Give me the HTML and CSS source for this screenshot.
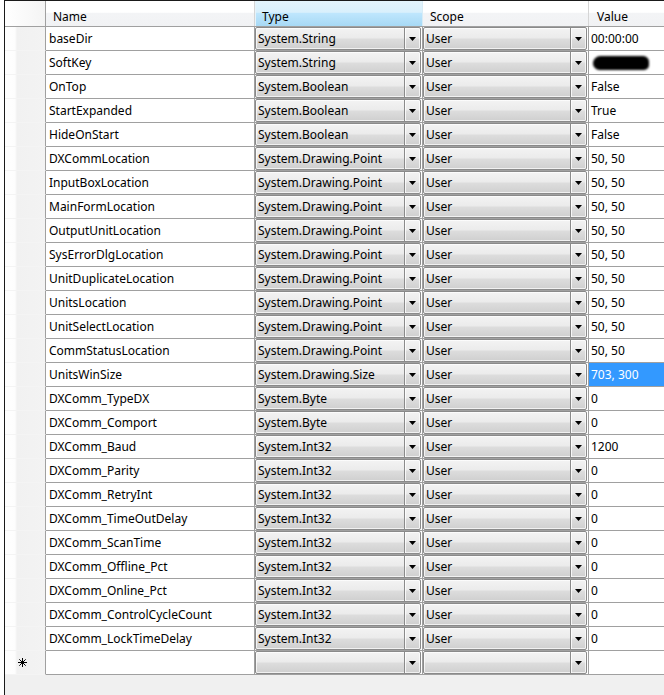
FILE: index.html
```html
<!DOCTYPE html>
<html>
<head>
<meta charset="utf-8">
<link rel="stylesheet" href="styles.css">
</head>
<body>
<div class="frame">
  <div class="hdr">
    <div class="hc rh"></div>
    <div class="hc c-name">Name</div>
    <div class="hc c-type hot">Type</div>
    <div class="hc c-scope">Scope</div>
    <div class="hc c-val">Value</div>
  </div>
  <div id="rows"></div>
</div>
<script src="app.js"></script>
</body>
</html>
```
FILE: app.js
```js
var data = [
  ["baseDir","System.String","00:00:00"],
  ["SoftKey","System.String","#REDACT"],
  ["OnTop","System.Boolean","False"],
  ["StartExpanded","System.Boolean","True"],
  ["HideOnStart","System.Boolean","False"],
  ["DXCommLocation","System.Drawing.Point","50, 50"],
  ["InputBoxLocation","System.Drawing.Point","50, 50"],
  ["MainFormLocation","System.Drawing.Point","50, 50"],
  ["OutputUnitLocation","System.Drawing.Point","50, 50"],
  ["SysErrorDlgLocation","System.Drawing.Point","50, 50"],
  ["UnitDuplicateLocation","System.Drawing.Point","50, 50"],
  ["UnitsLocation","System.Drawing.Point","50, 50"],
  ["UnitSelectLocation","System.Drawing.Point","50, 50"],
  ["CommStatusLocation","System.Drawing.Point","50, 50"],
  ["UnitsWinSize","System.Drawing.Size","703, 300"],
  ["DXComm_TypeDX","System.Byte","0"],
  ["DXComm_Comport","System.Byte","0"],
  ["DXComm_Baud","System.Int32","1200"],
  ["DXComm_Parity","System.Int32","0"],
  ["DXComm_RetryInt","System.Int32","0"],
  ["DXComm_TimeOutDelay","System.Int32","0"],
  ["DXComm_ScanTime","System.Int32","0"],
  ["DXComm_Offline_Pct","System.Int32","0"],
  ["DXComm_Online_Pct","System.Int32","0"],
  ["DXComm_ControlCycleCount","System.Int32","0"],
  ["DXComm_LockTimeDelay","System.Int32","0"],
  null
];
var arrow = '<svg class="arr" width="7" height="4" viewBox="0 0 7 4"><polygon points="0,0 7,0 3.5,4" fill="#000"/></svg>';
var star = '<svg class="star" width="9" height="9" viewBox="0 0 9 9"><g stroke="#000" stroke-width="1"><line x1="4.5" y1="0" x2="4.5" y2="9"/><line x1="0" y1="4.5" x2="9" y2="4.5"/><line x1="1.3" y1="1.3" x2="7.7" y2="7.7"/><line x1="7.7" y1="1.3" x2="1.3" y2="7.7"/></g></svg>';
function combo(t){
  return '<div class="combo"><span class="ctext">'+t+'</span><span class="cbtn">'+arrow+'</span></div>';
}
var html = '';
data.forEach(function(r){
  if(!r){
    html += '<div class="row newrow"><div class="c rh">'+star+'</div><div class="c c-name"></div>'+
      '<div class="c c-type">'+combo('')+'</div><div class="c c-scope">'+combo('')+'</div><div class="c c-val"></div></div>';
    return;
  }
  var v = r[2], vc = 'c c-val';
  if(v === '#REDACT'){ v = '<span class="redact"></span>'; }
  if(r[0] === 'UnitsWinSize'){ vc += ' sel'; }
  html += '<div class="row"><div class="c rh"></div><div class="c c-name">'+r[0]+'</div>'+
    '<div class="c c-type">'+combo(r[1])+'</div><div class="c c-scope">'+combo('User')+'</div>'+
    '<div class="'+vc+'">'+v+'</div></div>';
});
document.getElementById('rows').innerHTML = html;
```
FILE: styles.css
```css
html, body {
  margin: 0;
  padding: 0;
  background: #ffffff;
}
body {
  font-family: "Noto Sans", "Open Sans", sans-serif;
  font-size: 12px;
  color: #000;
  overflow: hidden;
}
.frame {
  margin-left: 4px;
  border-left: 1px solid #1a1a1a;
  border-top: 1px solid #1a1a1a;
  height: 694px;
  background: #f0f0f0;
  overflow: hidden;
}
.hdr {
  display: flex;
  height: 25px;
  border-bottom: 1px solid #a0a0a0;
  background: linear-gradient(#ffffff, #ffffff 45%, #f3f4f6 50%, #f1f2f4);
}
.hc {
  display: flex;
  align-items: center;
  box-sizing: border-box;
  border-right: 1px solid #d5d5d5;
  padding-left: 6px;
  padding-top: 5px;
  flex: none;
}
.hdr .rh { width: 41px; border-right: 1px solid #a0a0a0; padding: 0; background: linear-gradient(to right, #ffffff, #f4f4f4); }
.hdr .c-name { width: 209px; padding-left: 7px; }
.hdr .c-type { width: 168px; }
.hdr .c-scope { width: 166px; padding-left: 7px; }
.hdr .c-val { flex: 1; border-right: none; padding-left: 8px; }
.hdr .hot {
  background: linear-gradient(#e3f4fc, #d9f0fc 45%, #bee6fd 50%, #a7d9f5);
  border-left: 1px solid #e6f3fa;
  border-right: 1px solid #d8ecf6;
}
.row {
  display: flex;
  height: 24px;
}
.c {
  box-sizing: border-box;
  height: 24px;
  flex: none;
  border-bottom: 1px solid #a0a0a0;
  border-right: 1px solid #a0a0a0;
  background: #fff;
  display: flex;
  align-items: center;
  white-space: nowrap;
  overflow: hidden;
}
.c.rh {
  width: 41px;
  background: linear-gradient(to right, #ffffff 0, #fdfdfd 25%, #f1f1f1 30%, #f3f3f3 100%);
  border-bottom: 1px solid #f4f4f4;
  border-right: 1px solid #a0a0a0;
  padding-left: 13px;
}
.c.c-name { width: 209px; padding-left: 3px; }
.c.c-type { width: 168px; padding: 0; align-items: stretch; }
.c.c-scope { width: 166px; padding: 0; align-items: stretch; }
.c.c-val { flex: 1; border-right: none; padding-left: 2px; }
.c.sel { background: #3399ff; color: #fff; }
.combo {
  flex: 1;
  display: flex;
  margin: 0 1px 0 0;
  border: 1px solid #8a8a8a;
  border-radius: 2px;
  background: linear-gradient(#f3f3f3, #ebebeb 48%, #dddddd 52%, #cfcfcf);
  box-shadow: inset 0 0 0 1px rgba(255,255,255,0.7);
}
.ctext {
  flex: 1;
  display: flex;
  align-items: center;
  padding-left: 2px;
}
.cbtn {
  width: 15px;
  flex: none;
  display: flex;
  align-items: center;
  justify-content: center;
  border-left: 1px solid #8a8a8a;
  box-shadow: inset 1px 0 0 rgba(255,255,255,0.8);
}
.arr { display: block; }
.star { display: block; }
.redact {
  display: inline-block;
  width: 56px;
  height: 14px;
  margin-left: 2px;
  margin-top: 1px;
  background: #000;
  border-radius: 9px 7px 6px 8px;
  filter: blur(0.8px);
}
```
